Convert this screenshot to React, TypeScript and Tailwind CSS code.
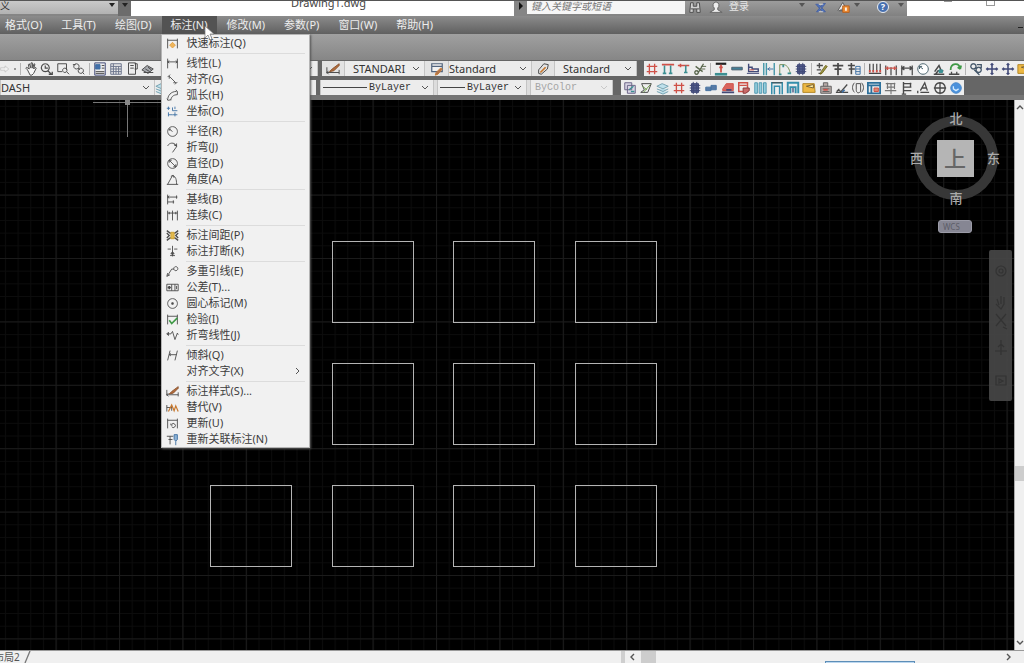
import React from "react";

type Shape = { d: string; c?: string; f?: string; w?: number };

const K = "#4a4a4a";
const R = "#cf5148";
const B = "#3d6fa3";
const T = "#3c8f92";
const O = "#c8792f";
const N = "#424a78";
const G = "#3f9a46";

const ICONS: Record<string, Shape[]> = {
  quick: [{ d: "M2 2v12M14 2v12M2 4h12" }, { d: "M8 6.5l3.5 3.5L8 13.5 4.500 10z", c: "#e2a042", f: "#efb65c" }],
  linear: [{ d: "M2 2v12M14 2v12M2 6h12M4 4.500L2 6l2 1.500M12 4.500l2 1.500-2 1.500" }],
  aligned: [{ d: "M2 5l3-3M11 14l3-3M4 4l8 8M4 4v3M12 12H9" }],
  arc: [{ d: "M2 14c0-6 4-11 11-11M6 14c0-4 3-7 8-7M1 12l2 2 3-1M12 1l2 2v4" }],
  ordinate: [{ d: "M3 2v4M1 4h4M3 9v5M3 12h5M8 3v4M8 7h6", c: B }, { d: "M11 2v3M11 9v5M8 12h6", c: B }],
  radius: [{ d: "M8 2a6 6 0 1 0 .1 0M8 8L4 5M4 7V5h2" }],
  jogged: [{ d: "M2 6c2-4 8-5 11 0M13 6l-3-1M10 4l3 3-5 7M13 3v4" }],
  diameter: [{ d: "M8 2a6 6 0 1 0 .1 0M4 4l8 8M4 7V4h3M9 12h3V9" }],
  angle: [{ d: "M1 14h14M2 14L8 3M8 3c4 1 5 5 5 11M6 4l3-1 1 3" }],
  baseline: [{ d: "M2 2v12M2 5h12M13 3v4M2 11h8M9 9v4M4 3.500L2 5l2 1.500" }],
  cont: [{ d: "M2 2v12M8 2v12M14 2v12M2 5h12M4 3.500v3M12 3.500v3" }],
  space: [{ d: "M1 2l4 3h6l4-3M1 14l4-3h6l4 3M1 5l3 3-3 3M15 5l-3 3 3 3", w: 1.6 }, { d: "M6 4h4v8H6z", c: "#d2a437", f: "#e3bb4d" }],
  break: [{ d: "M8 1v13M2 5h4M10 5h4M5 13h6M8 8l-2 3h4z", f: "#888" }],
  mleader: [{ d: "M2 13l5-8h3M1 14l1-4M1 14l4-2M12 2a2.500 2.500 0 1 0 .1 0" }],
  tolerance: [{ d: "M1 4h14v8H1zM7 4v8M11 4v8M13 6v4" }, { d: "M4 6v4M2 8h4", w: 2 }],
  center: [{ d: "M8 2a6 6 0 1 0 .1 0" }, { d: "M8 6.500v3M6.500 8h3", w: 2 }],
  inspect: [{ d: "M2 2v12M14 2v12M2 4h12" }, { d: "M4 9l3 4 7-7", c: G, w: 2 }],
  joglin: [{ d: "M1 6h5l2-3 3 10 3-8 1 2M3 4v4M3 4L1 6l2 2" }],
  oblique: [{ d: "M5 2L2 14M14 2l-3 12M4 7h9M6 5.500L4 7l2 1.500" }],
  style: [{ d: "M1 6v7M1 12h14M15 9v5M3 10l-2 2 2 2" }, { d: "M15 2L7 8l-3 3 5-1 6-6z", c: "#8a5430", f: "#b36c3b" }],
  override: [{ d: "M1 5v8M1 8h6M7 6v6" }, { d: "M3 13L7 5l3 7 2-6 3 7", c: O, w: 1.5 }],
  update: [{ d: "M2 2v12M14 2v12M2 4h12M7 9a2.500 2.500 0 1 1 0 3M6 8v2h2" }],
  reassoc: [{ d: "M1 4h8M3 8h5M5 4v10" }, { d: "M10 2h4v6l-2 2-2-2zM12 10v5", c: B, f: "#8eb2d4" }],
  hand: [{ d: "M4 9L2 7l1-1 3 2-1-5 1-1 2 5V1h1.500l.5 6 1.500-5 1 .5L11 8l2-2 1 1-3 6-2 2H7z", f: "#f7f7f7" }],
  zoomc: [{ d: "M6 2a4.500 4.500 0 1 0 .1 0M6 4v3h3M9 10l4 4", w: 1.3 }, { d: "M10 14h4v-3", w: 1.5 }],
  zoomw: [{ d: "M2 2h10v7M2 2v9h5M10 7a2.500 2.500 0 1 0 .1 0M12 11l3 3" }],
  zoomp: [{ d: "M5 2a3 3 0 1 0 .1 0M7 7l2 2M10 7a3 3 0 1 0 .1 0M12 12l2 2M1 3h3" }],
  props: [{ d: "M2 1h12v14H2z", c: N }, { d: "M3 3h5v5H3z", c: B, f: "#426eaa" }, { d: "M10 4h3M10 7h3M3 11h10M3 13h10" }],
  sheet: [{ d: "M2 2h12v12H2zM2 5h12M5 2v12M8 5v9M11 5v9M2 8h12M2 11h12", c: "#697389" }],
  palette: [{ d: "M4 1h8v13H4zM6 4h4M6 7h4M11 2h3v6h-3" }],
  calc: [{ d: "M1 9l6-5 7 4-6 5zM3 12h11M5 8l5 3M8 6l4 3", f: "#a8abb0" }],
  redo: [{ d: "M1 6h7V3l6 5-6 5v-3H1z", c: "#bdbdbd", f: "#f1f1f1" }],
  table: [{ d: "M2 2h12v9H2zM2 5h12", c: "#53657e", f: "#f1f1f1", w: 1.4 }, { d: "M14 8l-5 6-3 1 1-3 5-5z", c: O, f: "#ad7350" }],
  mstyle: [{ d: "M3 9L9 2l5 1-1 5-7 6-3-1z" }, { d: "M5 12l6-6", c: O, w: 2 }],
  hash: [{ d: "M5 2v12M11 2v12M2 5h12M2 11h12", c: R, w: 1.5 }],
  posts: [{ d: "M1 3h14", c: R, w: 2 }, { d: "M4 4v9M11 4v9M2 13h4M9 13h4", c: T, w: 1.8 }],
  tee: [{ d: "M1 4h13M4 2v4", c: R, w: 1.8 }, { d: "M10 4v8M8 12h4", c: T, w: 1.8 }],
  scissors: [{ d: "M5 14L12 2M3 5l8 6M4 10a2 2 0 1 0 .1 0", c: "#5a674e", w: 1.5 }, { d: "M9 5h6M9 8h5", c: "#5a674e" }],
  ibeam: [{ d: "M2 2h12", c: "#222", w: 2.500 }, { d: "M8 3v9M6 6h4", c: R, w: 2 }, { d: "M1 14h14", c: T, w: 3 }],
  slab: [{ d: "M2 6h12v3H2z", c: "#4d6270", f: "#427f96" }],
  step: [{ d: "M3 2v9h11V8H7V6H3", c: N, w: 1.6 }, { d: "M1 13h14", c: N }, { d: "M4 9h5", c: R }],
  cols: [{ d: "M2 1v14M14 1v14M5 1v14", c: "#4697a9", w: 1.6 }, { d: "M6 8h7M9 6L7 8l2 2", c: B }],
  curve: [{ d: "M2 14V3h5c4 1 6 5 7 10", c: "#788f55" }, { d: "M1 14h3M11 13h4M6 3v3", c: T, w: 2 }],
  block: [{ d: "M4 3h8v10H4zM2 5h12M2 8h12M2 11h12M6 1v14M10 1v14", c: N, f: "#525d8c" }],
  pencil: [{ d: "M2 4h7M5 1v6M2 9h5M4 13h4", w: 1.6 }, { d: "M14 5l-6 8-2 1 1-3 5-7z", c: "#776a20", f: "#9a9847" }],
  column: [{ d: "M2 4h12M4 8h8M8 1v14", w: 2 }],
  columns: [{ d: "M1 4h8M2 8h7M5 1v13", w: 1.8 }, { d: "M10 5h5v9h-5zM10 8h5M10 11h5", c: B }],
  multi: [{ d: "M2 2v9M6 2v9M10 2v9M14 2v9M1 13h14", w: 1.4 }, { d: "M2 9v3M6 9v3M10 9v3M14 9v3", c: R, w: 2 }],
  dimr: [{ d: "M2 4v11M8 6v9M14 4v11", w: 1.4 }, { d: "M1 7h14M4 5v4M12 5v4", c: R, w: 1.5 }],
  dimk: [{ d: "M2 4v11M14 4v11M2 7h12M5 5L2 7l3 2M11 5l3 2-3 2", w: 1.4 }],
  round: [{ d: "M8 2a6 6 0 1 0 .1 0M8 8L4 5M4 8V5h3", f: "#fff", c: "#425c66" }],
  weight: [{ d: "M2 14h12M3 11l5-7 3 7M4 14l3-4h6", w: 1.7 }, { d: "M8 9h4v3H8z", c: T, f: T }],
  rotate: [{ d: "M3 9c0-8 10-9 11-1M14 8l-3-2M14 8l1-4", c: G, w: 2 }, { d: "M1 14h12M4 11v3M10 11v3", w: 1.5 }],
  gears: [{ d: "M5 2a3 3 0 1 0 .1 0M11 6a3 3 0 1 0 .1 0M6 9l6 6M9 3h5v4", c: "#44576a", w: 1.5 }],
  move: [{ d: "M8 2v12M2 8h12M6.500 3.500L8 2l1.500 1.500M6.500 12.500L8 14l1.500-1.500M3.500 6.500L2 8l1.500 1.500M12.500 6.500L14 8l-1.500 1.500", c: N, w: 1.8 }],
  copy: [{ d: "M2 2h8v8H2zM5 5h9v9H5z", c: "#6a6385", f: "#dad7e5" }, { d: "M7 10l5-4M9 12h4", c: T, w: 1.5 }],
  note: [{ d: "M3 3h11l-4 10H2l4-3z" }, { d: "M4 6l5 4M5 13l8-9", c: "#6f9d4e" }],
  stack: [{ d: "M1 6l6-3 7 3-6 3zM1 9l7 3 6-3M1 12l7 3 6-3", c: "#77a2b1", f: "#bfe0eb" }],
  train: [{ d: "M2 7h6v4H2zM8 5h6v5H8z", c: "#4772a0", f: "#577ba7" }],
  redbox: [{ d: "M2 9l4-6h8v8H2z", c: R, f: "#d9655f" }, { d: "M1 13h14M6 10h6", c: N, w: 2 }],
  form: [{ d: "M2 2h10v10H2zM3 5h8", c: R, w: 1.7 }, { d: "M7 8h7v3l-4 3H7z", c: "#883a3a", f: "#c96968" }],
  pipes: [{ d: "M2 2h3v12H2zM7 2h3v12H7zM12 2h3v12h-3z", c: "#5098b1", f: "#94cedd" }],
  gate: [{ d: "M2 15V2h12v13M5 15V6h6v9", c: "#358eab", w: 1.700 }, { d: "M2 2h12", c: K }],
  gate2: [{ d: "M2 14V2h12v12M5 14V7h6v7", c: "#358eab", w: 2.200 }, { d: "M8 8v5", c: N, w: 1.5 }],
  folder: [{ d: "M1 3h13l1 10H1z", c: "#b28627", f: "#edb843" }, { d: "M5 6l8-2v4z", c: "#785f31", f: "#fff0a5" }],
  machine: [{ d: "M2 6h12v8H2zM5 6V2h5v4M4 9h8M4 12h8", c: "#626262", f: "#b7aaa6" }, { d: "M5 10h5", c: R, w: 2 }],
  branch: [{ d: "M1 13h14M3 10l4 2 7-8M2 12l3-3", w: 1.5 }, { d: "M8 13l3-3", c: B, w: 2 }],
  clip: [{ d: "M4 2c-3 3-3 8 0 11M6 3h5v9c-3 3-5 1-5-2V3M12 2c3 3 3 8 0 11" }],
  window: [{ d: "M1 2h14v12H1zM1 5h14M5 5v9", c: "#2d709b", w: 2 }, { d: "M8 8h5v4H8z", c: R, f: "#da8b76" }],
  annot: [{ d: "M2 3h11M3 7h9M1 11h13M8 3v12M4 2v7M12 2v7", c: "#777", w: 1.3 }],
  flag: [{ d: "M4 1v14M4 3h9M4 7h9M4 11h9M12 2v5M2 15h5", w: 1.6 }],
  letter: [{ d: "M5 11L10 2l3 9M7 8h5M5 13h10M2 11v3", w: 1.5 }],
  cross: [{ d: "M8 2a6 6 0 1 0 .1 0M8 1v14M1 8h14", w: 1.5 }],
  globe: [{ d: "M8 2a6 6 0 1 0 .1 0", c: "#4a87c7", f: "#4a91dc" }, { d: "M5 6v3l3 2 3-2", c: "#d3eaff", w: 1.5 }],
  binoc: [{ d: "M3 2h3v4h4V2h3l1 11h-4V9H6v4H2zM3 9h3M10 9h3", c: "#4d4d4d", f: "#d1d1d1" }],
  user: [{ d: "M8 1a4 4 0 0 0-2 7v2l-5 3h14l-5-3V8a4 4 0 0 0-2-7z", c: "#666", f: "#ededed" }],
  exch: [{ d: "M1 3h4l9 10h-4zM14 2h-3L2 13h3z", c: "#4660a0", f: "#4e72ba" }, { d: "M5 3h6M5 13h6", c: "#e3e3e3" }],
  lock: [{ d: "M1 12L7 2l3 5M2 12h7", c: "#555", f: "#eee" }, { d: "M7 6h8v8H7z", c: "#b45e20", f: "#ed8c32" }, { d: "M11 8v4", c: "#fff", w: 2 }],
};

function Icon({ name, size = "h-[14px] w-[14px]" }: { name: string; size?: string }) {
  return (
    <svg viewBox="0 0 16 16" className={`${size} shrink-0`} aria-hidden="true">
      {(ICONS[name] || []).map((s, i) => (
        <path key={i} d={s.d} fill={s.f || "none"} stroke={s.c || K} strokeWidth={s.w || 1.1} />
      ))}
    </svg>
  );
}

const DIMENSION_MENU: [string, string][][] = [
  [["quick", "快速标注(Q)"]],
  [["linear", "线性(L)"], ["aligned", "对齐(G)"], ["arc", "弧长(H)"], ["ordinate", "坐标(O)"]],
  [["radius", "半径(R)"], ["jogged", "折弯(J)"], ["diameter", "直径(D)"], ["angle", "角度(A)"]],
  [["baseline", "基线(B)"], ["cont", "连续(C)"]],
  [["space", "标注间距(P)"], ["break", "标注打断(K)"]],
  [["mleader", "多重引线(E)"], ["tolerance", "公差(T)..."], ["center", "圆心标记(M)"], ["inspect", "检验(I)"], ["joglin", "折弯线性(J)"]],
  [["oblique", "倾斜(Q)"], ["", "对齐文字(X)"]],
  [["style", "标注样式(S)..."], ["override", "替代(V)"], ["update", "更新(U)"], ["reassoc", "重新关联标注(N)"]],
];

function DimensionMenu() {
  return (
    <div role="menu" className="absolute -left-px top-full z-20 w-[149px] border border-[#b5b5b5] bg-[#f1f1f1] text-[#3c3c3c] shadow-[1px_1px_2px_#555]">
      {DIMENSION_MENU.map((group, g) => (
        <div key={g} role="group">
          {g > 0 && <div className="ml-6 mr-1 flex h-1 items-center"><div className="h-px flex-1 bg-[#dcdcdc]" /></div>}
          {group.map(([icon, label]) => (
            <button key={label} role="menuitem" className="flex h-4 w-full items-center pl-1 pr-2 text-left leading-4 whitespace-nowrap">
              <span className="flex w-[21px] shrink-0"><Icon name={icon} size="h-[13px] w-[13px]" /></span>
              {label}
              {icon === "" && (
                <svg viewBox="0 0 6 8" className="ml-auto h-2 w-1.5" aria-hidden="true"><path d="M1 1l3 3-3 3" fill="none" stroke="#555" /></svg>
              )}
            </button>
          ))}
        </div>
      ))}
    </div>
  );
}

function Combo({ label, value, className, line, disabled, mono }: { label: string; value: string; className: string; line?: string; disabled?: boolean; mono?: boolean }) {
  return (
    <div className={`relative flex h-full shrink-0 items-center border-x border-[#c4c4c4] bg-[#ececec] ${className}`}>
      {line && <span className={`h-px shrink-0 bg-[#444] ${line}`} />}
      <select
        aria-label={label}
        disabled={disabled}
        className={`h-full min-w-0 flex-1 appearance-none bg-transparent pr-3 leading-[14px] outline-none ${mono ? "font-['Liberation_Mono'] text-[10px]" : "text-[11px]"} ${disabled ? "text-[#a5a5a5]" : "text-[#333]"}`}
      >
        <option>{value}</option>
      </select>
      <svg viewBox="0 0 8 6" className="pointer-events-none absolute right-1 h-1.5 w-2" aria-hidden="true">
        <path d="M1 1l3 3 3-3" fill="none" stroke={disabled ? "#c8c8c8" : "#555"} />
      </svg>
    </div>
  );
}

function Tools({ names }: { names: string[] }) {
  return (
    <>
      {names.map((n, i) =>
        n === "|" ? (
          <span key={i} className="mx-0.5 h-3 w-px shrink-0 bg-[#b4b4b4]" />
        ) : (
          <button key={i} aria-label={n} className="flex w-4 shrink-0 justify-center"><Icon name={n} /></button>
        )
      )}
    </>
  );
}

function Caret({ light }: { light?: boolean }) {
  return <svg viewBox="0 0 8 5" className="h-[5px] w-2 shrink-0" aria-hidden="true"><path d="M1 0h6L4 4z" fill={light ? "#555" : "#222"} /></svg>;
}

function TitleBar() {
  return (
    <header className="flex h-4 shrink-0 overflow-hidden border-t border-[#555] bg-[#858585]">
      <button className="flex h-[13px] w-[118px] shrink-0 items-start justify-between bg-gradient-to-b from-[#c9c9c9] to-[#b2b2b2] pr-0.5 text-[10px] leading-[10px] text-[#333]">
        <span>义</span>
        <span className="pt-0.5"><Caret /></span>
      </button>
      <button aria-label="自定义" className="flex w-[13px] shrink-0 justify-center bg-[#6c6c6c] pt-0.5"><Caret /></button>
      <h1 className="h-[15px] min-w-0 flex-1 bg-white pl-3 text-center text-[11px] leading-1 font-normal text-[#444]">Drawing1.dwg</h1>
      <button aria-label="展开" className="flex w-[13px] shrink-0 justify-center bg-[#858585] pt-px">
        <svg viewBox="0 0 6 8" className="h-2 w-1.5"><path d="M1 0l4 4-4 4z" fill="#111" /></svg>
      </button>
      <input aria-label="搜索" placeholder="键入关键字或短语" className="h-[13px] w-[158px] shrink-0 bg-[#f6f6f6] pb-1 pl-1 text-[10px] leading-2 italic outline-none placeholder:text-[#777]" />
      <div className="flex h-[15px] w-[222px] shrink-0 items-start bg-gradient-to-b from-[#9c9c9c] to-[#818181] pl-0.5">
        <button aria-label="查找"><Icon name="binoc" size="h-[14px] w-[16px]" /></button>
        <button className="ml-1.5 flex text-[10px] leading-[10px] text-[#e6e6e6]"><Icon name="user" size="h-[14px] w-[14px]" /><span className="ml-1.5">登录</span></button>
        <span className="ml-auto flex gap-2 pr-0.5">
          <span className="pt-0.5"><Caret light /></span>
          <button aria-label="交换"><Icon name="exch" size="h-3 w-[14px]" /></button>
          <button aria-label="许可" className="flex"><Icon name="lock" size="h-[13px] w-[15px]" /></button>
          <span className="-ml-1.5 pt-0.5"><Caret light /></span>
          <button aria-label="帮助" className="ml-2 flex h-3 w-3 items-center justify-center rounded-full border border-[#eee] bg-[#4770b0] text-[9px] leading-[10px] font-bold text-white">?</button>
          <span className="pt-0.5"><Caret light /></span>
        </span>
      </div>
      <div className="flex h-[15px] w-[117px] shrink-0 items-start justify-end gap-[34px] bg-white pr-[29px]">
        <span className="h-px w-2 bg-[#999]" />
        <span className="h-[5px] w-[9px] border border-t-0 border-[#999]" />
      </div>
    </header>
  );
}

function MenuBar() {
  return (
    <nav className="flex h-[18px] shrink-0 items-stretch bg-gradient-to-b from-[#8c8c8c] to-[#606060] text-[11px] text-[#ededed]">
      <div className="-ml-1 flex gap-px">
        {["格式(O)", "工具(T)", "绘图(D)", "标注(N)", "修改(M)", "参数(P)", "窗口(W)", "帮助(H)"].map((m) => {
          const open = m === "标注(N)";
          return (
            <div key={m} className="relative">
              <button aria-expanded={open} className={`h-full px-[9px] leading-[18px] whitespace-nowrap ${open ? "bg-[#535353]" : ""}`}>{m}</button>
              {open && <DimensionMenu />}
              {open && (
                <svg viewBox="0 0 12 16" className="pointer-events-none absolute top-2.5 left-[42px] z-30 h-4 w-3" aria-hidden="true">
                  <path d="M1 0v12l3-3 2 5 2-1-2-5h4z" fill="#fff" stroke="#777" strokeWidth="0.7" />
                </svg>
              )}
            </div>
          );
        })}
      </div>
      <span className="mr-px mb-1.5 ml-auto h-px w-[5px] self-end bg-[#222]" />
    </nav>
  );
}

function Toolbars() {
  return (
    <section className="shrink-0 overflow-hidden bg-[#666] text-[11px]">
      <div className="h-[26px] bg-gradient-to-b from-[#a0a0a0] to-[#868686]" />
      <div className="mt-px flex h-[15px] overflow-hidden">
        <div className="flex w-[318px] shrink-0 items-center bg-[#ececec]">
          <Icon name="redo" size="h-[12px] w-[10px]" />
          <span className="mx-1 h-0.5 w-0.5 bg-[#999]" />
          <span className="mr-0.5 h-3 w-px bg-[#b4b4b4]" />
          <Tools names={["hand", "zoomc", "zoomw", "zoomp", "|", "props", "sheet", "palette", "calc"]} />
          <Combo label="工作空间" value="" className="ml-auto w-[150px]" />
        </div>
        <div className="ml-1 flex w-[315px] shrink-0 items-center bg-[#e3e3e3]">
          <span className="flex w-[22px] justify-center"><Icon name="style" /></span>
          <Combo label="标注样式" value="STANDARI" className="w-[81px] pl-2" />
          <span className="flex w-[23px] justify-center"><Icon name="table" /></span>
          <Combo label="表格样式" value="Standard" className="w-[84px]" />
          <span className="flex w-[22px] justify-center"><Icon name="mstyle" /></span>
          <Combo label="多重引线样式" value="Standard" className="w-[83px] pl-2" />
        </div>
        <div className="ml-[7px] flex min-w-0 flex-1 items-center overflow-hidden bg-[#ededed]">
          <Tools names={["hash", "posts", "tee", "scissors", "|", "ibeam", "slab", "step", "cols", "curve", "block", "|", "pencil", "column", "columns", "|", "multi", "dimr", "dimk", "round", "weight", "rotate", "|", "gears", "move", "move", "folder"]} />
        </div>
      </div>
      <div className="mt-1 flex h-[15px]">
        <div className="flex w-[316px] shrink-0 items-center bg-[#ececec]">
          <Combo label="图层" value="DASH" className="w-[155px]" />
          <Icon name="stack" />
        </div>
        <div className="ml-1 flex w-[293px] shrink-0 gap-[3px] bg-[#ddd]">
          <Combo label="线型" value="ByLayer" mono line="mx-0.5 w-[44px]" className="w-[114px]" />
          <Combo label="线宽" value="ByLayer" mono line="mx-0.5 w-[25px]" className="w-[90px]" />
          <Combo label="打印样式" value="ByColor" mono disabled className="min-w-0 flex-1 pl-1" />
        </div>
        <div className="ml-2 flex w-[343px] shrink-0 items-center justify-between bg-[#ededed] pl-px">
          <Tools names={["copy", "note", "stack", "hash", "block", "train", "redbox", "form", "pipes", "gate", "gate2", "folder", "machine", "branch", "clip", "window", "annot", "flag", "letter", "cross", "globe"]} />
        </div>
      </div>
      <div className="h-[5px] bg-[#747474]" />
    </section>
  );
}

const SQUARES = [
  [332, 141], [453, 141], [575, 141],
  [332, 263], [453, 263], [575, 263],
  [210, 385], [332, 385], [453, 385], [575, 385],
];

function Compass() {
  return (
    <div className="absolute top-[10px] right-[13px] w-[92px] text-[#aaa]">
      <div className="relative h-[96px]">
        <svg viewBox="0 0 92 96" className="absolute inset-0 h-full w-full" aria-hidden="true">
          <circle cx="47" cy="48" r="37" fill="none" stroke="#373737" strokeWidth="10" />
        </svg>
        <div className="relative flex h-full flex-col items-center justify-between pl-0.5 text-[13px] leading-[16px] font-medium">
          <span>北</span>
          <div className="-ml-0.5 flex w-full items-center justify-between">
            <span>西</span>
            <button className="h-[37px] w-[37px] bg-[#b5b5b5] text-[22px] leading-[34px] text-[#666]">上</button>
            <span>东</span>
          </div>
          <span>南</span>
        </div>
      </div>
      <button className="mx-auto mt-[14px] block h-[13px] w-[34px] rounded-[3px] border border-[#9c9ca8] bg-[#868693] pl-1 text-left text-[8px] leading-[11px] text-[#5d5d68]">WCS</button>
    </div>
  );
}

function Drawing() {
  return (
    <main className="relative min-w-0 flex-1 overflow-hidden bg-black">
      <svg className="absolute inset-0 h-full w-full" aria-label="图形">
        <defs>
          <pattern id="minor" x="55.600" y="31.200" width="12.680" height="12.680" patternUnits="userSpaceOnUse">
            <path d="M0.500 0v12.700M0 0.500h12.700" stroke="#0c0c0c" />
          </pattern>
          <pattern id="major" x="55.600" y="31.200" width="63.400" height="63.400" patternUnits="userSpaceOnUse">
            <path d="M0.500 0v63.400M0 0.500h63.400" stroke="#1b1b1b" />
          </pattern>
        </defs>
        <rect width="100%" height="100%" fill="url(#minor)" />
        <rect width="100%" height="100%" fill="url(#major)" />
        {SQUARES.map(([x, y]) => (
          <rect key={`${x}-${y}`} x={x + 0.5} y={y + 0.5} width="81" height="81" fill="none" stroke="#b4b4b4" />
        ))}
        <path d="M93 2.500h68M127.500 0v37" stroke="#777" />
        <rect x="125" y="0" width="5" height="5" fill="#888" />
      </svg>
      <Compass />
      <div className="absolute top-[150px] right-[2px] flex h-[151px] w-[23px] justify-center rounded-[2px] bg-[#484848]/90">
        <svg viewBox="0 0 16 151" className="h-full w-4" aria-hidden="true">
          <g fill="none" stroke="#333" strokeWidth="1.200">
            <circle cx="8" cy="21" r="5" /><circle cx="8" cy="21" r="2" />
            <path d="M4 49l2 6M8 46v8M11 47v7l-3 5-5-5M3 64l10 12M13 64L3 76M10 77l4 2M8 90v15M2 101h12M5 97l3-3 3 3M3 126h10v9H3zM6 129v4l4-2z" />
          </g>
        </svg>
      </div>
    </main>
  );
}

function Chevron({ d }: { d: string }) {
  return <svg viewBox="0 0 8 8" className="h-2 w-2 shrink-0" aria-hidden="true"><path d={d} fill="none" stroke="#555" strokeWidth="1.400" /></svg>;
}

export default function App() {
  return (
    <div className="flex h-screen flex-col overflow-hidden bg-[#f0f0f0] font-['Noto_Sans','Noto_Sans_CJK_SC',sans-serif]">
      <TitleBar />
      <MenuBar />
      <Toolbars />
      <div className="flex min-h-0 flex-1">
        <Drawing />
        <aside className="flex w-[10px] shrink-0 flex-col items-center justify-between border-l border-[#aaa] bg-[#f0f0f0] py-[3px]">
          <button aria-label="向上"><Chevron d="M1 6l3-3 3 3" /></button>
          <span className="mt-[196px] h-[15px] w-full bg-[#cdcdcd]" />
          <button aria-label="向下"><Chevron d="M1 2l3 3 3-3" /></button>
        </aside>
      </div>
      <footer className="flex h-[13px] shrink-0 border-t border-[#999] text-[10px] leading-3 text-[#555]">
        <button className="-ml-1.5 flex h-3 items-center pr-1 whitespace-nowrap">布局2</button>
        <svg viewBox="0 0 8 12" className="h-3 w-2" aria-hidden="true"><path d="M1 12L6 0" stroke="#777" strokeWidth="1.300" /></svg>
        <div className="ml-auto flex w-[403px] border-l-4 border-[#cfcfcf]">
          <button aria-label="向左" className="flex w-4 shrink-0 items-center justify-center"><Chevron d="M5 1L2 4l3 3" /></button>
          <span className="h-3 w-[15px] bg-[#cdcdcd]" />
          <span className="ml-[169px] h-0.5 w-[90px] self-end border-x border-t border-[#5d8eb8] bg-[#bcd7ef]" />
          <button aria-label="向右" className="mr-3 ml-auto flex items-center"><Chevron d="M3 1l3 3-3 3" /></button>
        </div>
      </footer>
    </div>
  );
}
